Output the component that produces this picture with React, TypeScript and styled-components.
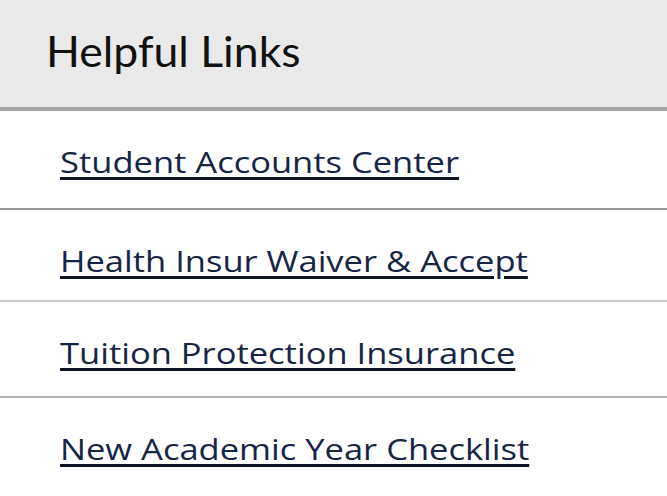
import React from "react";
import styled, { createGlobalStyle } from "styled-components";

const GlobalStyle = createGlobalStyle`
  body {
    margin: 0;
    background: #ffffff;
  }
`;

// row heights differ a little in the screenshot, so keep them per link
const links = [
  { label: "Student Accounts Center", line: "#9a9a9a", height: 99 },
  { label: "Health Insur Waiver & Accept", line: "#c8c8c8", height: 92 },
  { label: "Tuition Protection Insurance", line: "#b4b4b4", height: 96 },
  { label: "New Academic Year Checklist", line: "transparent", height: 92 },
];

const App = () => {
  return (
    <>
      <GlobalStyle />
      <Panel>
        <Header>
          <Title>Helpful Links</Title>
        </Header>
        <LinkList>
          {links.map((l) => (
            <LinkRow key={l.label} $line={l.line} $height={l.height}>
              <LinkText href="#">{l.label}</LinkText>
            </LinkRow>
          ))}
        </LinkList>
      </Panel>
    </>
  );
};

export default App;

const Panel = styled.div`
  width: 667px;
  height: 496px;
  overflow: hidden;
  display: flex;
  flex-direction: column;
  background: #ffffff;
`;

const Header = styled.div`
  flex-shrink: 0;
  height: 111px;
  padding-top: 26px;
  padding-left: 46px;
  box-sizing: border-box;

  background-color: #e9e9e9;
  border-bottom: 4px solid #a3a3a3;
`;

const Title = styled.h2`
  margin: 0;
  display: inline-block;
  transform: scaleX(1.06);
  transform-origin: left center;

  font-family: Lato, "Noto Sans", sans-serif;
  font-weight: 400;
  font-size: 42px;
  line-height: normal;
  color: #111111;
`;

const LinkList = styled.ul`
  flex-shrink: 0;
  margin: 0;
  padding: 0;
  list-style: none;
`;

const LinkRow = styled.li<{ $line: string; $height: number }>`
  height: ${(props) => props.$height}px;
  padding-top: 31px;
  padding-left: 60px;
  box-sizing: border-box;

  border-bottom: 2px solid ${(props) => props.$line};
`;

const LinkText = styled.a`
  display: inline-block;
  transform: scaleX(1.19);
  transform-origin: left center;

  font-family: "Open Sans", "Noto Sans", sans-serif;
  font-size: 29px;
  line-height: 40px;
  color: #162546;

  text-decoration: underline;
  text-decoration-thickness: 3px;
  text-underline-offset: 4px;
  text-decoration-color: #0e1626;
`;
